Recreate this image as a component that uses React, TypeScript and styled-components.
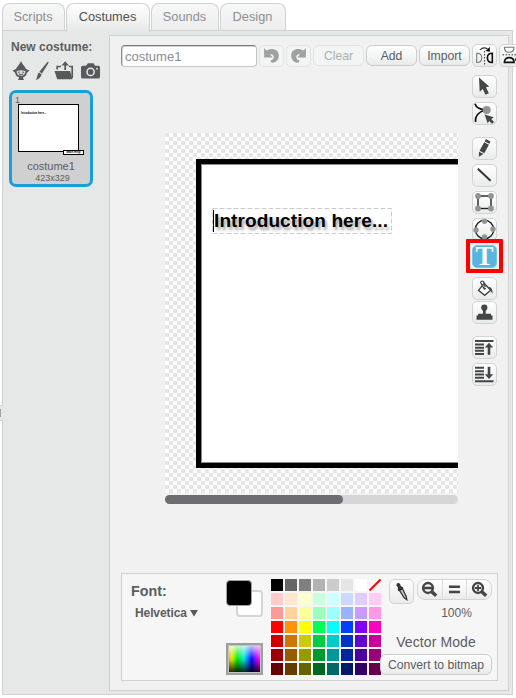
import React from "react";
import styled, { createGlobalStyle, css } from "styled-components";

const GlobalStyle = createGlobalStyle`
  * { box-sizing: border-box; }
  html, body { margin: 0; padding: 0; background: #fff; overflow: hidden; }
  body { font-family: "Liberation Sans", Arial, sans-serif; color: #5c5d5f; }
  svg { display: block; flex: none; }
`;

const Page = styled.div`
  position: relative;
  width: 516px;
  height: 698px;
  padding: 3px 0 0 2px;
  overflow: hidden;
`;

const Tabs = styled.nav`
  display: flex;
  gap: 1px;
  height: 27px;
`;

const Tab = styled.div<{ $width: number; $active?: boolean }>`
  position: relative;
  z-index: ${(p) => (p.$active ? 2 : 0)};
  width: ${(p) => p.$width}px;
  height: ${(p) => (p.$active ? 29 : 27)}px;
  border: 1px solid #d0d1d2;
  border-bottom: 0;
  border-radius: 8px 8px 0 0;
  background: ${(p) =>
    p.$active ? "linear-gradient(#ffffff, #e6e8e8)" : "linear-gradient(#f6f7f7, #ededed)"};
  color: ${(p) => (p.$active ? "#505153" : "#8e8f91")};
  font-size: 12.8px;
  line-height: 26px;
  padding-right: 1px;
  text-align: center;
  white-space: nowrap;
`;

const Panel = styled.main`
  display: flex;
  width: 511px;
  height: 665px;
  border: 1px solid #d0d1d2;
  background: #e6e8e8;
`;

const Sidebar = styled.aside`
  width: 106px;
  flex: none;
  padding: 9px 0 0 6px;
`;

const SidebarTitle = styled.div`
  padding-left: 2px;
  font-size: 12px;
  font-weight: bold;
  line-height: 14px;
`;

const SourceIcons = styled.div`
  display: grid;
  grid-template-columns: 23px 19px 27px 20px;
  align-items: center;
  margin-top: 4px;
  height: 26px;
  padding-left: 3px;
`;

const CostumeCard = styled.div`
  display: flex;
  flex-direction: column;
  align-items: center;
  position: relative;
  width: 84px;
  height: 97px;
  margin-top: 6px;
  padding-top: 11px;
  border: 3px solid #179fd7;
  border-radius: 7px;
  background: #d0d0d0;
`;

const CostumeIndex = styled.span`
  position: absolute;
  left: 3px;
  top: 2px;
  font-size: 9px;
  line-height: 10px;
`;

const Thumb = styled.div`
  position: relative;
  width: 61px;
  height: 48px;
  margin-right: 5px;
  padding: 6px 0 0 2px;
  border: 1px solid #000;
  background: #fff;
  color: #000;
  font-size: 2.8px;
  font-weight: bold;
  line-height: 5px;
`;

const ThumbTag = styled.span`
  position: absolute;
  right: -6px;
  bottom: -4px;
  width: 21px;
  height: 5px;
  border: 1px solid #000;
  background: #fff;
  font-size: 3px;
  line-height: 3px;
  text-align: center;
`;

const CostumeName = styled.div`
  margin-top: 8px;
  font-size: 11px;
  line-height: 13px;
`;

const CostumeSize = styled.div`
  margin-left: 3px;
  font-size: 9px;
  line-height: 11px;
`;

const Editor = styled.section`
  display: flex;
  flex-direction: column;
  width: 400px;
  height: 656px;
  margin: 4px 0 0;
  padding: 8px 0 0 11px;
  border: 1px solid #d0d1d2;
  background: #f1f1f1;
`;

const Toolbar = styled.div`
  display: flex;
  align-items: center;
  gap: 2px;
  height: 23px;
  width: 410px;
`;

const NameField = styled.div`
  width: 136px;
  height: 22px;
  padding-left: 3px;
  border: 1px solid #c4c5c6;
  border-top-color: #77787a;
  border-left-color: #8f9092;
  box-shadow: inset 1px 1px 0 #d4d5d6;
  border-radius: 4px;
  background: #fff;
  color: #8c8d8f;
  font-size: 13px;
  line-height: 21px;
`;

const raised = css`
  border: 1px solid #d2d3d4;
  border-radius: 5px;
  background: linear-gradient(#ffffff, #e9ebeb);
`;

const TextButton = styled.div<{ $width: number; $disabled?: boolean }>`
  ${raised}
  width: ${(p) => p.$width}px;
  height: 21px;
  flex: none;
  border-radius: 6px;
  border-color: ${(p) => (p.$disabled ? "#e2e3e3" : "#cbcccd")};
  background: ${(p) => (p.$disabled ? "#f3f4f4" : "linear-gradient(#ffffff, #e9ebeb)")};
  color: ${(p) => (p.$disabled ? "#aeafb0" : "#5c5d5f")};
  font-size: 12.2px;
  line-height: 20px;
  text-align: center;
  white-space: nowrap;
`;

const IconButton = styled.div<{ $disabled?: boolean; $height?: number; $gap?: number; $on?: boolean }>`
  ${raised}
  display: flex;
  align-items: center;
  justify-content: center;
  width: 25px;
  height: ${(p) => p.$height ?? 23}px;
  margin-top: ${(p) => p.$gap ?? 0}px;
  flex: none;
  ${(p) => p.$disabled && css`border-color: #e2e3e3; background: #f3f4f4;`}
  ${(p) => p.$on && css`border-color: #83c2df; background: #57b5e2;`}
`;

const Workspace = styled.div`
  display: flex;
  height: 506px;
`;

const CanvasColumn = styled.div`
  width: 293px;
  margin: 66px 14px 0 44px;
  flex: none;
`;

const Canvas = styled.div`
  height: 360px;
  padding: 26px 0 0 31px;
  overflow: hidden;
  background: repeating-conic-gradient(#ffffff 0 25%, #e6e6e6 0 50%) 0 0 / 8px 8px;
`;

const Slide = styled.div`
  width: 300px;
  height: 309px;
  padding: 44px 0 0 11px;
  border: 5px solid #000;
  outline: 1px solid #8a8a8a;
  outline-offset: -6px;
  background: #fff;
`;

const TextSelection = styled.div`
  position: relative;
  width: 181px;
  height: 27px;
  color: #000;
  font-size: 19px;
  font-weight: bold;
  line-height: 25px;
  padding-left: 2px;
  letter-spacing: 0.1px;
  white-space: nowrap;
  text-shadow: 2px 3px 3px rgba(0, 0, 0, 0.38);
`;

const SelectionOutline = styled.svg`
  position: absolute;
  left: 0;
  top: 0;
`;

const ScrollTrack = styled.div`
  height: 9px;
  margin-top: 2px;
  border-radius: 5px;
  background: #d4d5d6;
`;

const ScrollThumb = styled.div`
  width: 178px;
  height: 9px;
  border-radius: 5px;
  background: #6d6e72;
`;

const Tools = styled.div`
  display: flex;
  flex-direction: column;
  padding-top: 8px;
`;

const Highlight = styled.div`
  position: absolute;
  left: 466px;
  top: 239px;
  width: 37px;
  height: 34px;
  border: 4px solid #ff0000;
  border-radius: 1px;
`;

const Options = styled.div`
  display: flex;
  width: 377px;
  height: 108px;
  border: 1px solid #d0d1d2;
  background: #f6f6f6;
`;

const FontPicker = styled.div`
  width: 104px;
  padding: 8px 0 0 9px;
`;

const FontLabel = styled.div`
  font-size: 14.3px;
  font-weight: bold;
  line-height: 18px;
`;

const FontValue = styled.div`
  display: flex;
  align-items: center;
  gap: 3px;
  padding: 6px 0 0 4px;
  font-size: 12px;
  font-weight: bold;
  line-height: 15px;
  letter-spacing: -0.1px;
`;

const ColorColumn = styled.div`
  width: 45px;
  padding-top: 6px;
`;

const ActiveColors = styled.div`
  display: grid;
  width: 37px;
  height: 37px;
`;

const Swatch = styled.div<{ $front?: boolean }>`
  grid-area: 1 / 1;
  width: ${(p) => (p.$front ? 26 : 27)}px;
  height: ${(p) => (p.$front ? 26 : 27)}px;
  justify-self: ${(p) => (p.$front ? "start" : "end")};
  align-self: ${(p) => (p.$front ? "start" : "end")};
  border: ${(p) => (p.$front ? "1px solid #a2a3a4" : "2px solid #d4d5d6")};
  border-radius: 4px;
  background: ${(p) => (p.$front ? "#000" : "#fff")};
`;

const Spectrum = styled.div`
  width: 37px;
  height: 32px;
  margin-top: 26px;
  border: 2px solid #9c9d9e;
  outline: 1px solid #c3c3c3;
  outline-offset: -3px;
  background:
    linear-gradient(rgba(255,255,255,0.8), rgba(255,255,255,0) 50%, rgba(0,0,0,0) 50%, rgba(0,0,0,0.9)),
    linear-gradient(90deg, #ff9d00, #d8f000 12%, #00ee00 28%, #00e8e8 49%, #0010ff 71%, #ff00ff 94%, #ff0080);
`;

const Palette = styled.div`
  display: grid;
  grid-template-columns: repeat(8, 12px);
  grid-auto-rows: 12px;
  gap: 2px;
  align-content: start;
  width: 110px;
  padding-top: 5px;
`;

const PaletteCell = styled.div<{ $color: string }>`
  background: ${(p) => p.$color};
`;

const ViewControls = styled.div`
  display: flex;
  flex-direction: column;
  align-items: flex-end;
  width: 112px;
  margin-left: -1px;
  padding-top: 5px;
`;

const ViewTop = styled.div`
  display: flex;
  align-items: flex-start;
  gap: 3px;
  height: 25px;
`;

const ZoomGroup = styled.div`
  ${raised}
  display: flex;
  width: 75px;
  height: 21px;
  border-radius: 8px;
`;

const ZoomCell = styled.div`
  display: flex;
  flex: 1;
  align-items: center;
  justify-content: center;
  & + & { border-left: 1px solid #dcdddd; }
`;

const ZoomLevel = styled.div`
  width: 71px;
  margin-top: 1px;
  font-size: 12px;
  line-height: 17px;
  text-align: center;
`;

const Mode = styled.div`
  width: 112px;
  height: 18px;
  margin: 11px 0 3px;
  font-size: 14px;
  line-height: 18px;
  text-align: center;
  letter-spacing: 0.1px;
`;

const CollapseHandle = styled.div`
  position: absolute;
  left: 0;
  top: 405px;
  width: 3px;
  height: 16px;
  border: solid #d0d1d2;
  border-width: 1px 0;
  background: linear-gradient(90deg, #a0a2a5 1px, #e6e8e8 1px) 0 3px / 3px 8px no-repeat, #e6e8e8;
`;

const PALETTE: string[] = [
  "#000000", "#666666", "#808080", "#b2b2b2", "#cccccc", "#e5e5e5", "#ffffff", "none",
  "#ffcccc", "#ffe6cc", "#ffffcc", "#ccffdd", "#ccffff", "#ccd9ff", "#e2ccff", "#ffccf2",
  "#ff9999", "#ffd399", "#ffff99", "#99ffbb", "#99ffff", "#99b3ff", "#cc99ff", "#ff99e5",
  "#ff0000", "#ff9400", "#ffff00", "#00ff55", "#00ffff", "#0040ff", "#8000ff", "#ff00bf",
  "#cc0000", "#cc7700", "#cccc00", "#00cc44", "#00cccc", "#0033cc", "#6600cc", "#cc0099",
  "#990000", "#995900", "#999900", "#009933", "#009999", "#002699", "#4d0099", "#990073",
  "#660000", "#663b00", "#666600", "#006622", "#006666", "#001a66", "#330066", "#66004c",
];

const INK = "#444547";

const UndoArrow = ({ flip = false }: { flip?: boolean }) => (
  <svg width="17" height="16" viewBox="0 0 17 16">
    <g transform={flip ? "translate(17 0) scale(-1 1)" : undefined}>
      <path d="M1 .2 3.6 2.6C8 -.6 15.4 .8 15.8 7C16 11.8 13 14.6 8.6 14.8L7.4 12.4C10 12 11.2 10.4 10.6 8.3C10 6.5 8.4 6 7.1 6.6L9.6 9.4 1.2 9.6Z" fill="#a0a1a2" />
    </g>
  </svg>
);

const SpriteIcon = () => (
  <svg width="18" height="20" viewBox="0 0 18 20" fill="#58595b">
    <path d="M9 0C10 3.5 13 5 14 8L17.5 9.5 14.8 12C14.5 15 12 16.2 10.8 16.5L12 19H6L7.2 16.5C6 16 3.5 15 3.2 12L.5 9.5 4 8C5 5 8 3.5 9 0Z" />
    <path d="M4.6 10Q9 8.5 13.4 10Q13.4 14.6 9 14.8Q4.6 14.6 4.6 10Z" fill="#d8d9da" />
    <path d="M6 11.2h1.8M10.2 11.2h1.8M6.8 13Q9 14.4 11.2 13" stroke="#58595b" fill="none" />
  </svg>
);

const BrushIcon = () => (
  <svg width="14" height="20" viewBox="0 0 14 20" fill="#58595b">
    <path d="M13.2.8Q14 1.2 13.2 2.4L7 12.6 4.4 10.8 12.2 1.2Q12.7.5 13.2.8ZM4 11.4 6.6 13.3Q5.6 17.8 .6 19 Q2.3 17 2.4 14.4 2.7 12.2 4 11.4Z" />
  </svg>
);

const UploadIcon = () => (
  <svg width="20" height="20" viewBox="0 0 20 20" fill="#58595b">
    <path d="M.5 10H16L18.5 18.3H3.2Z" />
    <path d="M3.2 8.5V5.5H7M15 5.5H18.2V17" fill="none" stroke="#58595b" strokeWidth="1.7" />
    <path d="M11.2.3 15 4.5H12.1V9H10.3V4.5H7.5Z" />
  </svg>
);

const CameraIcon = () => (
  <svg width="19" height="16" viewBox="0 0 19 16">
    <path d="M1.5 2.8H5L7 .3H12.5L14.2 2.8H17.5Q19 2.8 19 4.3V14Q19 15.5 17.5 15.5H1.5Q0 15.5 0 14V4.3Q0 2.8 1.5 2.8Z" fill="#58595b" />
    <circle cx="9.6" cy="8.9" r="3.6" fill="none" stroke="#e6e8e8" strokeWidth="1.5" />
    <circle cx="16" cy="5.7" r=".9" fill="#e6e8e8" />
  </svg>
);

const MirrorIcon = () => (
  <svg width="21" height="21" viewBox="0 0 21 21" fill="none">
    <path d="M2.7 8.3C6.5 8.3 7.8 10 7.8 12.7S6.5 17.5 2.7 17.5Z" stroke="#77787a" strokeWidth="1.1" />
    <path d="M18.3 8.3C14.7 8.3 13.4 10 13.4 12.7S14.7 17.5 18.3 17.5Z" stroke="#111" strokeWidth="1.6" />
    <path d="M10.6 6V19.5" stroke="#333" strokeDasharray="1.5 1.5" />
    <path d="M6 5C8 2.7 11 2.4 13.6 4" stroke="#333" strokeWidth="1.1" />
    <path d="M15.8 2V6.8L11.7 6Z" fill="#000" />
  </svg>
);

const MirrorVerticalIcon = () => (
  <svg width="21" height="21" viewBox="0 0 21 21" fill="none">
    <path d="M3.4 2.3H13C13 5.8 11 7.3 8.2 7.3S3.4 5.8 3.4 2.3Z" stroke="#77787a" strokeWidth="1.1" />
    <path d="M3.4 17.4H13C13 14 11 12.7 8.2 12.7S3.4 14 3.4 17.4Z" stroke="#111" strokeWidth="1.7" />
    <path d="M1.5 9.8H15.5" stroke="#333" strokeDasharray="1.5 1.5" />
    <path d="M16 4.5C18.4 7 18.2 10.5 16.6 13" stroke="#333" strokeWidth="1.1" />
    <path d="M18.8 15.6H13.8L15.2 11.4Z" fill="#000" />
  </svg>
);

const PointerIcon = () => (
  <svg width="21" height="21" viewBox="0 0 21 21" fill={INK}>
    <path d="M5 1.6 15.2 10.6 12 11.2 14.8 17.3 11.4 18.8 8.8 13 5.7 15.8Z" />
  </svg>
);

const ReshapeIcon = () => (
  <svg width="23" height="21" viewBox="0 0 23 21">
    <path d="M2 .8C3 4.4 7 6.4 12 7C6 8.8 1.8 12 2.5 19" fill="none" stroke="#111" strokeWidth="1.7" />
    <circle cx="13.7" cy="7" r="4" fill="#929394" />
    <path d="M11.6 11.6 20.8 14.2 18.3 15.9 21 18.9 19 20.8 16.3 17.9 14.6 20.3Z" fill={INK} />
  </svg>
);

const PencilIcon = () => (
  <svg width="21" height="21" viewBox="0 0 21 21" fill={INK}>
    <path d="M11.9 1 16.5 3.4 15.4 5.8 10.7 3.4ZM10.2 4.2 14.9 6.7 10.3 15.2 5.6 12.7ZM5.1 13.7 9.5 16 4.8 18.7Z" />
  </svg>
);

const LineIcon = () => (
  <svg width="21" height="21" viewBox="0 0 21 21"><path d="M3.8 3.7 16.6 15.7" stroke="#333436" strokeWidth="2" /></svg>
);

const RectIcon = () => (
  <svg width="21" height="21" viewBox="0 0 21 21">
    <rect x="4" y="4" width="13" height="12.5" fill="none" stroke="#222" strokeWidth="1.4" />
    {[[4, 4], [17, 4], [4, 16.5], [17, 16.5]].map(([x, y]) => <circle key={`${x}-${y}`} cx={x} cy={y} r="2.9" fill="#929394" />)}
  </svg>
);

const EllipseIcon = () => (
  <svg width="23" height="21" viewBox="0 0 23 21">
    <circle cx="11.5" cy="10.5" r="9.2" fill="none" stroke="#222" strokeWidth="1.4" />
    {[[11.5, 2.3], [3, 11], [20, 10], [11.5, 18]].map(([x, y]) => <circle key={`${x}-${y}`} cx={x} cy={y} r="2.7" fill="#929394" />)}
  </svg>
);

const TextGlyph = styled.span`
  color: #fff;
  font: bold 27px/20px "Liberation Serif", serif;
  margin-top: -1px;
`;

const BucketIcon = () => (
  <svg width="21" height="21" viewBox="0 0 21 21">
    <path d="M10.3 5.4 16.7 12.2 10.7 17.4 4.5 12.4Z" fill="#fff" stroke={INK} strokeWidth="1.4" />
    <path d="M10 10.4 6.6 4.6Q7 2.5 9.5 3.5L11.2 9.2" fill="none" stroke={INK} strokeWidth="1.2" />
    <circle cx="10.6" cy="10.6" r="1.2" fill={INK} />
    <path d="M14.4 8.8Q18.6 9 18.6 15.8L16.2 12.2Z" fill={INK} />
  </svg>
);

const StampIcon = () => (
  <svg width="21" height="21" viewBox="0 0 21 21" fill={INK}>
    <circle cx="10.3" cy="5.7" r="3.1" />
    <path d="M9 7H11.7V12H9ZM4 11.7H17V13.7H4ZM2.5 13.4H18.5V17.8H2.5Z" />
  </svg>
);

const LayerIcon = ({ down = false }: { down?: boolean }) => (
  <svg width="19" height="17" viewBox="0 0 19 17">
    <path d={down ? "M0 1.7H9M0 5.2H9M0 8.5H9M0 11.8H9M0 15.3H18.5" : "M0 2H18.5M0 5.6H9M0 8.7H9M0 11.8H9M0 15H9"} stroke={INK} strokeWidth="2" />
    <path d={down ? "M14 .8V11" : "M14 6V15.8"} stroke={INK} strokeWidth="2.6" />
    <path d={down ? "M9.8 8.3H18.2L14 13Z" : "M9.8 8.4H18.2L14 3.8Z"} fill={INK} />
  </svg>
);

const NoColorIcon = () => (
  <svg width="12" height="12" viewBox="0 0 12 12"><path d="M.5 11.5 11.5.5" stroke="#ff0000" strokeWidth="2" /></svg>
);

const DropperIcon = () => (
  <svg width="21" height="21" viewBox="0 0 21 21">
    <path d="M6.4 2.2C8.2 1.6 9.5 3 9.7 5L11.9 6.2 12.3 8 7.4 10.2 6.7 8.3 7 6.4C5.2 5 5 3 6.4 2.2Z" fill="#333436" />
    <path d="M8.4 9.4 11.6 8 15.2 15.4 15.8 18.6 13.2 16.9Z" fill="#c9cacb" stroke="#333436" strokeWidth="1.3" />
  </svg>
);

const LensIcon = ({ plus = false }: { plus?: boolean }) => (
  <svg width="17" height="17" viewBox="0 0 17 17" fill="none" stroke={INK}>
    <circle cx="7" cy="7" r="4.9" strokeWidth="2.5" />
    <path d="M10.5 10.5 15.2 14.8" strokeWidth="3.4" />
    <path d={plus ? "M4 7H10M7 4V10" : "M3 7H11"} strokeWidth={plus ? 1.8 : 2.6} />
  </svg>
);

const EqualsIcon = () => (
  <svg width="11" height="9" viewBox="0 0 11 9"><path d="M0 1.8H11M0 7H11" stroke={INK} strokeWidth="2.5" /></svg>
);

const CaretIcon = () => (
  <svg width="8" height="7" viewBox="0 0 8 7"><path d="M0 0H8L4 6.4Z" fill="#58595b" /></svg>
);

export default function App() {
  return (
    <Page>
      <GlobalStyle />
      <Tabs>
        <Tab $width={63}>Scripts</Tab>
        <Tab $width={84} $active>Costumes</Tab>
        <Tab $width={68}>Sounds</Tab>
        <Tab $width={66}>Design</Tab>
      </Tabs>
      <Panel>
        <Sidebar>
          <SidebarTitle>New costume:</SidebarTitle>
          <SourceIcons>
            <SpriteIcon />
            <BrushIcon />
            <UploadIcon />
            <CameraIcon />
          </SourceIcons>
          <CostumeCard>
            <CostumeIndex>1</CostumeIndex>
            <Thumb>
              Introduction here...
              <ThumbTag>Main Help</ThumbTag>
            </Thumb>
            <CostumeName>costume1</CostumeName>
            <CostumeSize>423x329</CostumeSize>
          </CostumeCard>
        </Sidebar>
        <Editor>
          <Toolbar>
            <NameField>costume1</NameField>
            <IconButton $disabled $height={22}><UndoArrow /></IconButton>
            <IconButton $disabled $height={22}><UndoArrow flip /></IconButton>
            <TextButton $width={51} $disabled>Clear</TextButton>
            <TextButton $width={51}>Add</TextButton>
            <TextButton $width={51}>Import</TextButton>
            <IconButton><MirrorIcon /></IconButton>
            <IconButton><MirrorVerticalIcon /></IconButton>
          </Toolbar>
          <Workspace>
            <CanvasColumn>
              <Canvas>
                <Slide>
                  <TextSelection>
                    <SelectionOutline width="181" height="27">
                      <rect x=".5" y=".5" width="179" height="25" fill="none" stroke="#cccccc" strokeDasharray="5 2" />
                      <path d="M1.5 2V24" stroke="#000" />
                    </SelectionOutline>
                    Introduction here...
                  </TextSelection>
                </Slide>
              </Canvas>
              <ScrollTrack><ScrollThumb /></ScrollTrack>
            </CanvasColumn>
            <Tools>
              <IconButton><PointerIcon /></IconButton>
              <IconButton $gap={4}><ReshapeIcon /></IconButton>
              <IconButton $gap={12}><PencilIcon /></IconButton>
              <IconButton $gap={4}><LineIcon /></IconButton>
              <IconButton $gap={4}><RectIcon /></IconButton>
              <IconButton $gap={4}><EllipseIcon /></IconButton>
              <IconButton $gap={4} $on><TextGlyph>T</TextGlyph></IconButton>
              <IconButton $gap={9}><BucketIcon /></IconButton>
              <IconButton $gap={1}><StampIcon /></IconButton>
              <IconButton $gap={12}><LayerIcon /></IconButton>
              <IconButton $gap={4}><LayerIcon down /></IconButton>
            </Tools>
          </Workspace>
          <Options>
            <FontPicker>
              <FontLabel>Font:</FontLabel>
              <FontValue>Helvetica <CaretIcon /></FontValue>
            </FontPicker>
            <ColorColumn>
              <ActiveColors>
                <Swatch />
                <Swatch $front />
              </ActiveColors>
              <Spectrum />
            </ColorColumn>
            <Palette>
              {PALETTE.map((color, i) => (
                <PaletteCell key={i} $color={color}>{color === "none" && <NoColorIcon />}</PaletteCell>
              ))}
            </Palette>
            <ViewControls>
              <ViewTop>
                <IconButton $height={25}><DropperIcon /></IconButton>
                <ZoomGroup>
                  <ZoomCell><LensIcon /></ZoomCell>
                  <ZoomCell><EqualsIcon /></ZoomCell>
                  <ZoomCell><LensIcon plus /></ZoomCell>
                </ZoomGroup>
              </ViewTop>
              <ZoomLevel>100%</ZoomLevel>
              <Mode>Vector Mode</Mode>
              <TextButton $width={112}>Convert to bitmap</TextButton>
            </ViewControls>
          </Options>
        </Editor>
      </Panel>
      <CollapseHandle />
      <Highlight />
    </Page>
  );
}
